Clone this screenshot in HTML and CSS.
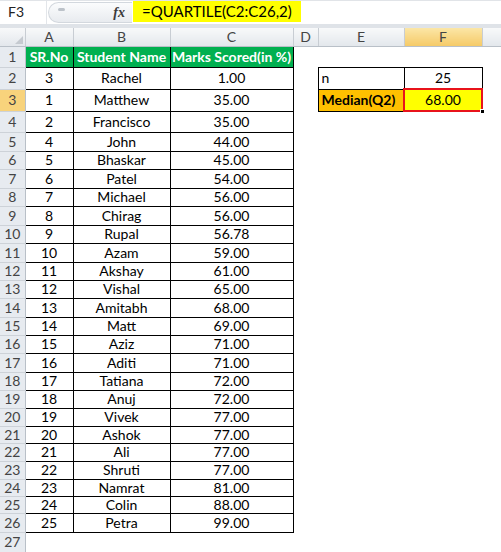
FILE: index.html
```html
<!DOCTYPE html>
<html lang="en">
<head>
  <meta charset="UTF-8" />
  <title>QUARTILE - Median</title>
  <link rel="stylesheet" href="styles.css">
</head>
<body>

  <div class="fbar">
    <div class="namebox">F3</div>
    <div class="grip"><span class="dot"></span><span class="fx">fx</span></div>
    <div class="formula"><span>=QUARTILE(C2:C26,2)</span></div>
  </div>
  <div class="band"></div>

  <table class="sheet">
    <colgroup>
      <col class="c-rn"><col class="c-a"><col class="c-b"><col class="c-c"><col class="c-d"><col class="c-e"><col class="c-f"><col class="c-g">
    </colgroup>
    <tr class="hdr">
      <th class="corner"><svg width="8" height="8" viewBox="0 0 8 8"><polygon points="8,0 8,8 0,8" fill="#c5cad0"/></svg></th>
      <th>A</th><th>B</th><th>C</th><th>D</th><th>E</th><th class="sel">F</th><th></th>
    </tr>
    <tr class="h21"><th class="rn">1</th><td class="cell tt">SR.No</td><td class="cell tt">Student Name</td><td class="cell tt">Marks Scored(in %)</td><td></td><td></td><td></td><td></td></tr>
    <tr class="h22"><th class="rn">2</th><td class="cell">3</td><td class="cell">Rachel</td><td class="cell">1.00</td><td></td><td class="box lbl">n</td><td class="box">25</td><td></td></tr>
    <tr class="h22"><th class="rn sel">3</th><td class="cell">1</td><td class="cell">Matthew</td><td class="cell">35.00</td><td></td><td class="box lbl med">Median(Q2)</td><td class="q2">68.00<span class="handle"></span></td><td></td></tr>
    <tr class="h21"><th class="rn">4</th><td class="cell">2</td><td class="cell">Francisco</td><td class="cell">35.00</td><td></td><td></td><td></td><td></td></tr>
    <tr class="h19"><th class="rn">5</th><td class="cell">4</td><td class="cell">John</td><td class="cell">44.00</td><td></td><td></td><td></td><td></td></tr>
    <tr class="h18"><th class="rn">6</th><td class="cell">5</td><td class="cell">Bhaskar</td><td class="cell">45.00</td><td></td><td></td><td></td><td></td></tr>
    <tr class="h19"><th class="rn">7</th><td class="cell">6</td><td class="cell">Patel</td><td class="cell">54.00</td><td></td><td></td><td></td><td></td></tr>
    <tr class="h18"><th class="rn">8</th><td class="cell">7</td><td class="cell">Michael</td><td class="cell">56.00</td><td></td><td></td><td></td><td></td></tr>
    <tr class="h19"><th class="rn">9</th><td class="cell">8</td><td class="cell">Chirag</td><td class="cell">56.00</td><td></td><td></td><td></td><td></td></tr>
    <tr class="h18"><th class="rn">10</th><td class="cell">9</td><td class="cell">Rupal</td><td class="cell">56.78</td><td></td><td></td><td></td><td></td></tr>
    <tr class="h19"><th class="rn">11</th><td class="cell">10</td><td class="cell">Azam</td><td class="cell">59.00</td><td></td><td></td><td></td><td></td></tr>
    <tr class="h18"><th class="rn">12</th><td class="cell">11</td><td class="cell">Akshay</td><td class="cell">61.00</td><td></td><td></td><td></td><td></td></tr>
    <tr class="h18"><th class="rn">13</th><td class="cell">12</td><td class="cell">Vishal</td><td class="cell">65.00</td><td></td><td></td><td></td><td></td></tr>
    <tr class="h19"><th class="rn">14</th><td class="cell">13</td><td class="cell">Amitabh</td><td class="cell">68.00</td><td></td><td></td><td></td><td></td></tr>
    <tr class="h18"><th class="rn">15</th><td class="cell">14</td><td class="cell">Matt</td><td class="cell">69.00</td><td></td><td></td><td></td><td></td></tr>
    <tr class="h18"><th class="rn">16</th><td class="cell">15</td><td class="cell">Aziz</td><td class="cell">71.00</td><td></td><td></td><td></td><td></td></tr>
    <tr class="h19"><th class="rn">17</th><td class="cell">16</td><td class="cell">Aditi</td><td class="cell">71.00</td><td></td><td></td><td></td><td></td></tr>
    <tr class="h18"><th class="rn">18</th><td class="cell">17</td><td class="cell">Tatiana</td><td class="cell">72.00</td><td></td><td></td><td></td><td></td></tr>
    <tr class="h18"><th class="rn">19</th><td class="cell">18</td><td class="cell">Anuj</td><td class="cell">72.00</td><td></td><td></td><td></td><td></td></tr>
    <tr class="h18"><th class="rn">20</th><td class="cell">19</td><td class="cell">Vivek</td><td class="cell">77.00</td><td></td><td></td><td></td><td></td></tr>
    <tr class="h17"><th class="rn">21</th><td class="cell">20</td><td class="cell">Ashok</td><td class="cell">77.00</td><td></td><td></td><td></td><td></td></tr>
    <tr class="h18"><th class="rn">22</th><td class="cell">21</td><td class="cell">Ali</td><td class="cell">77.00</td><td></td><td></td><td></td><td></td></tr>
    <tr class="h18"><th class="rn">23</th><td class="cell">22</td><td class="cell">Shruti</td><td class="cell">77.00</td><td></td><td></td><td></td><td></td></tr>
    <tr class="h17"><th class="rn">24</th><td class="cell">23</td><td class="cell">Namrat</td><td class="cell">81.00</td><td></td><td></td><td></td><td></td></tr>
    <tr class="h17"><th class="rn">25</th><td class="cell">24</td><td class="cell">Colin</td><td class="cell">88.00</td><td></td><td></td><td></td><td></td></tr>
    <tr class="h19"><th class="rn">26</th><td class="cell">25</td><td class="cell">Petra</td><td class="cell">99.00</td><td></td><td></td><td></td><td></td></tr>
    <tr class="h20"><th class="rn">27</th><td></td><td></td><td></td><td></td><td></td><td></td><td></td></tr>
  </table>

</body>
</html>
```

FILE: styles.css
```css
* { margin: 0; padding: 0; box-sizing: border-box; }
body {
  font-family: Lato, 'Liberation Sans', sans-serif;
  background: #fff;
  color: #000;
  width: 501px;
  height: 552px;
  overflow: hidden;
}

/* formula bar */
.fbar {
  display: flex;
  height: 24px;
  border-top: 1px solid #e1e4e8;
  background: #fff;
}
.namebox {
  width: 47px;
  padding-left: 8px;
  font-size: 14px;
  line-height: 22px;
  color: #222;
  border-right: 1px solid #e3e6ea;
}
.grip {
  width: 84px;
  height: 21px;
  margin: 1px 0 0 1px;
  border: 1px solid #d3d8de;
  border-right: none;
  border-radius: 11px 0 0 11px;
  background: linear-gradient(#fbfcfd, #e8ebef);
  display: flex;
  align-items: center;
  justify-content: space-between;
  padding: 0 7px 0 9px;
}
.dot {
  width: 7px;
  height: 3px;
  margin-top: -6px;
  border-radius: 2px;
  background: #bcc2c9;
}
.fx {
  font-family: 'Liberation Serif', serif;
  font-style: italic;
  font-weight: bold;
  font-size: 14px;
  color: #3a3a3a;
}
.formula {
  flex: 1;
  padding-left: 1px;
}
.formula span {
  display: inline-block;
  height: 21px;
  padding: 0 9px;
  background: #ffff00;
  font-size: 15px;
  line-height: 21px;
}
.band {
  height: 4px;
  background: #dfe3e8;
}

/* sheet */
.sheet {
  width: 501px;
  table-layout: fixed;
  border-collapse: collapse;
}
.c-rn { width: 25px; }
.c-a { width: 48px; }
.c-b { width: 97px; }
.c-c { width: 123px; }
.c-d { width: 25px; }
.c-e { width: 86px; }
.c-f { width: 78px; }
.c-g { width: 19px; }

.h17 { height: 17px; }
.h18 { height: 18px; }
.h19 { height: 19px; }
.h20 { height: 20px; }
.h21 { height: 21px; }
.h22 { height: 22px; }

.hdr { height: 18px; }
.hdr th {
  background: linear-gradient(#f8f9fa, #e3e7ec);
  border-right: 1px solid #c8cdd3;
  border-bottom: 1px solid #b9c0c8;
  font-weight: normal;
  font-size: 14px;
  color: #444;
  line-height: 1;
}
.hdr th.sel {
  background: linear-gradient(#fbe6a6, #f5ca68);
}
.corner {
  text-align: right;
  vertical-align: bottom;
  padding: 0 2px 2px 0;
}
.corner svg { display: block; margin-left: auto; }

.rn {
  background: #e7ebf0;
  border-right: 1px solid #b9c0c8;
  border-bottom: 1px solid #cdd2d8;
  font-weight: normal;
  font-size: 14px;
  color: #444;
  line-height: 1;
}
.rn.sel { background: #f8d37c; }

td {
  padding: 0;
  font-size: 14px;
  line-height: 1;
  text-align: center;
  white-space: nowrap;
  overflow: hidden;
}
.cell { border: 1px solid #000; }
.tt {
  background: #00b050;
  color: #fff;
  font-weight: bold;
}
.box { border: 1px solid #000; }
.lbl {
  text-align: left;
  padding-left: 3px;
}
.med {
  background: #ffc000;
  font-weight: bold;
}
.q2 {
  position: relative;
  overflow: visible;
  background: #ffff00;
  border: 2px solid #e8131b;
}
.handle {
  position: absolute;
  right: -4px;
  bottom: -4px;
  width: 5px;
  height: 5px;
  background: #000;
  border: 1px solid #fff;
}
```
